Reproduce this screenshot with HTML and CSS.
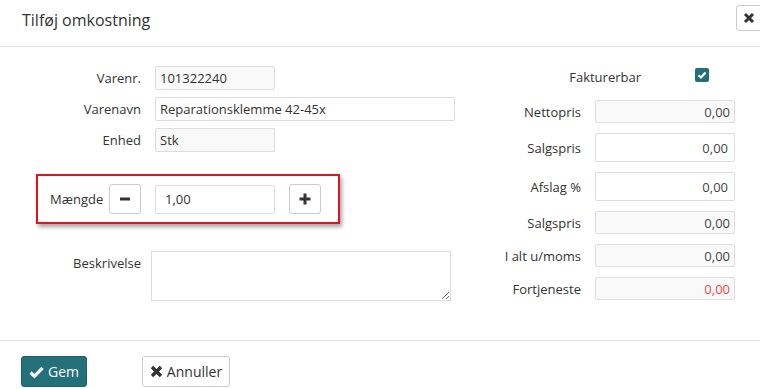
FILE: index.html
```html
<!DOCTYPE html>
<html lang="da">
<head>
  <meta charset="UTF-8" />
  <title>Tilføj omkostning</title>
  <link rel="stylesheet" href="styles.css">
</head>
<body>
  <div class="modal">
    <div class="modal-header">
      <h4>Tilføj omkostning</h4>
      <button class="close">
        <svg width="12" height="12" viewBox="0 0 12 12"><path d="M2 2 L10 10 M10 2 L2 10" stroke="#333" stroke-width="3"/></svg>
      </button>
    </div>

    <div class="modal-body">
      <!-- left side: item fields -->
      <div class="col-left">
        <div class="row">
          <label>Varenr.</label>
          <input class="field short" type="text" value="101322240" readonly>
        </div>
        <div class="row">
          <label>Varenavn</label>
          <input class="field wide" type="text" value="Reparationsklemme 42-45x">
        </div>
        <div class="row">
          <label>Enhed</label>
          <input class="field short" type="text" value="Stk" readonly>
        </div>

        <div class="qty-box">
          <label>Mængde</label>
          <button class="btn-step">
            <svg width="14" height="14" viewBox="0 0 14 14"><path d="M2 7 H12" stroke="#333" stroke-width="3"/></svg>
          </button>
          <input class="field qty" type="text" value="1,00">
          <button class="btn-step">
            <svg width="14" height="14" viewBox="0 0 14 14"><path d="M1.5 7 H12.5 M7 1.5 V12.5" stroke="#333" stroke-width="3"/></svg>
          </button>
        </div>

        <div class="row desc">
          <label>Beskrivelse</label>
          <textarea></textarea>
        </div>
      </div>

      <!-- right side: prices -->
      <div class="col-right">
        <div class="check-row">
          <span class="check-label">Fakturerbar</span>
          <span class="checkbox">
            <svg width="10" height="10" viewBox="0 0 10 10"><path d="M1.5 5.2 L4 7.5 L8.5 2.5" stroke="#fff" stroke-width="2.2" fill="none"/></svg>
          </span>
        </div>
        <div class="price-row">
          <label>Nettopris</label>
          <input class="price ro" type="text" value="0,00" readonly>
        </div>
        <div class="price-row">
          <label>Salgspris</label>
          <input class="price rw" type="text" value="0,00">
        </div>
        <div class="price-row">
          <label>Afslag %</label>
          <input class="price rw" type="text" value="0,00">
        </div>
        <div class="price-row">
          <label>Salgspris</label>
          <input class="price ro" type="text" value="0,00" readonly>
        </div>
        <div class="price-row">
          <label>I alt u/moms</label>
          <input class="price ro" type="text" value="0,00" readonly>
        </div>
        <div class="price-row">
          <label>Fortjeneste</label>
          <input class="price ro negative" type="text" value="0,00" readonly>
        </div>
      </div>
    </div>

    <div class="modal-footer">
      <button class="btn btn-save">
        <svg width="15" height="14" viewBox="0 0 15 14"><path d="M1.5 7.5 L5.5 11.2 L13.5 2.8" stroke="#fff" stroke-width="3.2" fill="none"/></svg>
        Gem
      </button>
      <button class="btn btn-cancel">
        <svg width="13" height="13" viewBox="0 0 13 13"><path d="M2 2 L11 11 M11 2 L2 11" stroke="#333" stroke-width="3.4"/></svg>
        Annuller
      </button>
    </div>
  </div>
</body>
</html>
```

FILE: styles.css
```css
* {
  box-sizing: border-box;
  margin: 0;
  padding: 0;
}

body {
  font-family: "Open Sans", "Noto Sans", sans-serif;
  font-size: 13px;
  color: #333;
  background: #fff;
  overflow: hidden;
}

.modal {
  width: 760px;
}

/* header */
.modal-header {
  height: 47px;
  display: flex;
  justify-content: space-between;
  align-items: flex-start;
  padding-left: 22px;
  border-bottom: 1px solid #e5e5e5;
}

.modal-header h4 {
  font-size: 16px;
  font-weight: 400;
  line-height: 20px;
  margin-top: 10px;
}

.close {
  width: 30px;
  height: 26px;
  margin-top: 5px;
  margin-right: -6px;
  background: #fff;
  border: 1px solid #ccc;
  border-radius: 3px;
  display: flex;
  align-items: center;
  justify-content: center;
  padding-right: 4px;
}

/* body */
.modal-body {
  height: 293px;
  display: flex;
}

.col-left {
  width: 480px;
  padding: 19px 0 0 22px;
}

.row {
  display: flex;
  align-items: center;
  margin-bottom: 7px;
}

.row label {
  width: 119px;
  text-align: right;
  margin-right: 14px;
}

.field {
  height: 24px;
  font: inherit;
  color: #333;
  border: 1px solid #ddd;
  border-radius: 2px;
  padding: 0 4px;
  outline: none;
  background: #fff;
}

.field[readonly] {
  background: #f9f9f9;
}

.short {
  width: 120px;
}

.wide {
  width: 300px;
}

/* quantity block with the red frame */
.qty-box {
  width: 304px;
  height: 50px;
  margin: 22px 0 0 14px;
  border: 2px solid #e8101a;
  box-shadow: 2px 3px 4px rgba(0, 0, 0, 0.35);
  display: flex;
  align-items: center;
  padding-left: 12px;
}

.qty-box label {
  width: 59px;
}

.btn-step {
  width: 32px;
  height: 30px;
  background: #fff;
  border: 1px solid #ccc;
  border-radius: 3px;
  display: flex;
  align-items: center;
  justify-content: center;
  flex-shrink: 0;
}

.field.qty {
  width: 120px;
  height: 29px;
  margin: 0 14px;
  padding-left: 9px;
  border-color: #ddd;
}

.row.desc {
  align-items: flex-start;
  margin-top: 27px;
}

.row.desc label {
  margin-right: 10px;
  padding-top: 3px;
}

textarea {
  width: 300px;
  height: 50px;
  border: 1px solid #ddd;
  font: inherit;
  outline: none;
}

.col-right {
  width: 255px;
  padding-top: 17px;
  display: flex;
  flex-direction: column;
  gap: 10px;
}

.check-row {
  height: 22px;
  display: flex;
  align-items: center;
  margin-bottom: 4px;
}

.check-label {
  width: 161px;
  text-align: right;
  padding-top: 4px;
}

.checkbox {
  width: 14px;
  height: 14px;
  margin-left: 54px;
  background: #23707a;
  border-radius: 2px;
  display: flex;
  align-items: center;
  justify-content: center;
}

.price-row {
  display: flex;
  align-items: center;
}

.price-row label {
  width: 101px;
  text-align: right;
  margin-right: 14px;
}

.price {
  width: 140px;
  font: inherit;
  color: #444;
  text-align: right;
  border: 1px solid #ddd;
  border-radius: 2px;
  padding: 0 4px;
  outline: none;
  background: #fff;
}

.price.ro {
  height: 23px;
  background: #f9f9f9;
}

.price.rw {
  height: 29px;
  padding-right: 6px;
}

.price.negative {
  color: #f0474b;
}

/* footer */
.modal-footer {
  border-top: 1px solid #e5e5e5;
  padding: 15px 0 0 21px;
  display: flex;
  gap: 55px;
}

.btn {
  height: 31px;
  font: inherit;
  font-size: 14px;
  border-radius: 3px;
  display: flex;
  align-items: center;
  justify-content: center;
  gap: 4px;
  padding: 0 6px;
}

.btn svg {
  flex-shrink: 0;
}

.btn-save {
  width: 66px;
  background: #23707a;
  color: #fff;
  border: 1px solid #1d626b;
}

.btn-cancel {
  width: 88px;
  background: #fff;
  color: #333;
  border: 1px solid #ccc;
}
```
